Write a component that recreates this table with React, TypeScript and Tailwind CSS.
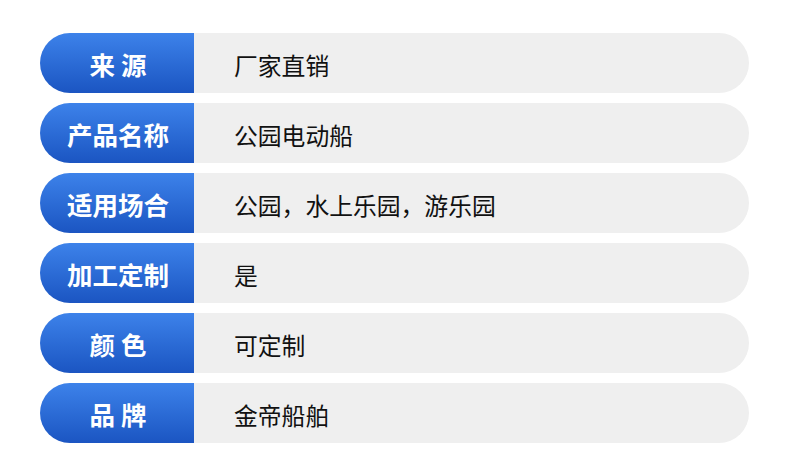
const rows = [
  { label: "来 源", value: "厂家直销" },
  { label: "产品名称", value: "公园电动船" },
  { label: "适用场合", value: "公园，水上乐园，游乐园" },
  { label: "加工定制", value: "是" },
  { label: "颜 色", value: "可定制" },
  { label: "品 牌", value: "金帝船舶" },
];

export default function App() {
  return (
    <div
      className="flex h-[476px] w-[790px] flex-col gap-[10px] bg-white pl-[40px] pt-[33px]"
      style={{ fontFamily: '"Noto Sans CJK SC", "Noto Sans", sans-serif' }}
    >
      {rows.map((row) => (
        <div key={row.label} className="flex h-[60px] w-[709px]">
          <div className="flex w-[154px] items-center justify-center rounded-l-full bg-gradient-to-b from-[#3d82ea] to-[#1b55c2] pl-[2px] pt-[3px] text-[25.5px] font-bold text-white">
            {row.label}
          </div>
          <div className="flex flex-1 items-center rounded-r-full bg-[#efefef] pl-[40px] pt-[3px] text-[23.8px] text-[#111]">
            {row.value}
          </div>
        </div>
      ))}
    </div>
  );
}
